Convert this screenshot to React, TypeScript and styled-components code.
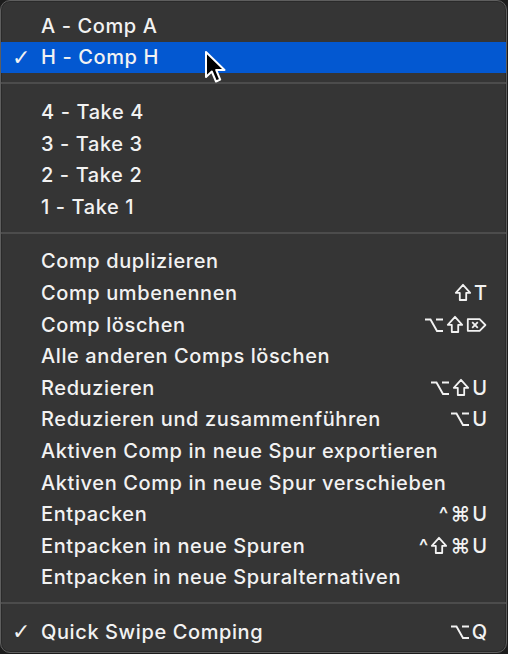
import { createGlobalStyle, styled } from 'styled-components'

type Item = {
  label: string
  shortcut?: string
  checked?: boolean
  active?: boolean
}

const groups: Item[][] = [
  [
    { label: 'A - Comp A' },
    { label: 'H - Comp H', checked: true, active: true },
  ],
  [
    { label: '4 - Take 4' },
    { label: '3 - Take 3' },
    { label: '2 - Take 2' },
    { label: '1 - Take 1' },
  ],
  [
    { label: 'Comp duplizieren' },
    { label: 'Comp umbenennen', shortcut: 'ST' },
    { label: 'Comp löschen', shortcut: 'OSD' },
    { label: 'Alle anderen Comps löschen' },
    { label: 'Reduzieren', shortcut: 'OSU' },
    { label: 'Reduzieren und zusammenführen', shortcut: 'OU' },
    { label: 'Aktiven Comp in neue Spur exportieren' },
    { label: 'Aktiven Comp in neue Spur verschieben' },
    { label: 'Entpacken', shortcut: 'CMU' },
    { label: 'Entpacken in neue Spuren', shortcut: 'CSMU' },
    { label: 'Entpacken in neue Spuralternativen' },
  ],
  [
    { label: 'Quick Swipe Comping', shortcut: 'OQ', checked: true },
  ],
]

// key codes: O option, S shift, C control, M command, D forward delete
function Key({ k }: { k: string }) {
  if (k === 'S') {
    return <KeySvg width="18" height="19" viewBox="0 0 18 19">
      <path d="M9 1.8 L16.2 9.8 L12.2 9.8 L12.2 17 L5.8 17 L5.8 9.8 L1.8 9.8 Z"
        fill="none" stroke="currentColor" strokeWidth="1.8" strokeLinejoin="round" />
    </KeySvg>
  }
  if (k === 'D') {
    return <KeySvg width="21" height="18" viewBox="0 0 21 18">
      <path d="M1.8 3.2 L13.6 3.2 L19.4 9 L13.6 14.8 L1.8 14.8 Z"
        fill="none" stroke="currentColor" strokeWidth="1.8" strokeLinejoin="round" />
      <path d="M6.2 6.2 L11.8 11.8 M11.8 6.2 L6.2 11.8" stroke="currentColor" strokeWidth="1.8" />
    </KeySvg>
  }
  if (k === 'O') {
    return <KeySvg width="20" height="18" viewBox="0 0 20 18">
      <path d="M1 3.5 L6.5 3.5 L13 15 L19 15 M12 3.5 L19 3.5"
        fill="none" stroke="currentColor" strokeWidth="1.9" />
    </KeySvg>
  }
  if (k === 'C') return <Glyph>^</Glyph>
  if (k === 'M') return <Glyph>⌘</Glyph>
  return <Glyph>{k}</Glyph>
}

export default function App() {
  return <>
    <GlobalStyle />
    <Menu>
      {groups.map((group, gi) => (
        <Group key={gi}>
          {gi > 0 && <Separator />}
          {group.map((item) => (
            <Row key={item.label} $active={item.active}>
              <Check>{item.checked ? '✓' : ''}</Check>
              <Label>{item.label}</Label>
              {item.shortcut && <Shortcut>
                {item.shortcut.split('').map((k, i) => <Key key={i} k={k} />)}
              </Shortcut>}
              {item.active && <Cursor />}
            </Row>
          ))}
        </Group>
      ))}
    </Menu>
  </>
}

function Cursor() {
  return <CursorSvg width="26" height="36" viewBox="0 0 26 36">
    <path
      d="M2 2 L2 27 L7.8 21.5 L12 31.5 L16.2 29.7 L12.2 20 L20.5 20 Z"
      fill="#000"
      stroke="#fff"
      strokeWidth="2"
      strokeLinejoin="round"
    />
  </CursorSvg>
}

const GlobalStyle = createGlobalStyle`
  html, body {
    margin: 0;
    background: #1c1c1c;
  }
  body {
    font-family: Inter, "Liberation Sans", sans-serif;
    -webkit-font-smoothing: antialiased;
  }
`
const Menu = styled.div`
  box-sizing: border-box;
  width: 507px;
  height: 653px;
  background: #353535;
  border: 1px solid #5e5e5e;
  border-radius: 10px;
  box-shadow: inset 0 0 0 1px #2a2a2a;
  padding: 9px 0 5px;
  overflow: hidden;
`
const Group = styled.div`
  display: flex;
  flex-direction: column;
`
const Separator = styled.div`
  height: 2px;
  background: #4c4c4c;
  margin: 9px 0 12px;
`
const Row = styled.div<{ $active?: boolean }>`
  position: relative;
  display: flex;
  align-items: center;
  height: 31.6px;
  padding: 0 19px 0 11px;
  color: #f2f2f2;
  background: ${p => p.$active ? '#0358d1' : 'transparent'};
  font-size: 20px;
  font-weight: 500;
  letter-spacing: 0.6px;
`
const Check = styled.span`
  width: 29px;
  flex: none;
  font-family: "DejaVu Sans", sans-serif;
  font-weight: 300;
  font-size: 22px;
`
const Label = styled.span`
  flex: 1;
  white-space: nowrap;
`
const Shortcut = styled.span`
  display: flex;
  align-items: center;
  gap: 2px;
  letter-spacing: 0;
`
const Glyph = styled.span`
  font-size: 20px;
  line-height: 1;
`
const KeySvg = styled.svg`
  display: block;
`
const CursorSvg = styled.svg`
  position: absolute;
  left: 203px;
  top: 8px;
`
